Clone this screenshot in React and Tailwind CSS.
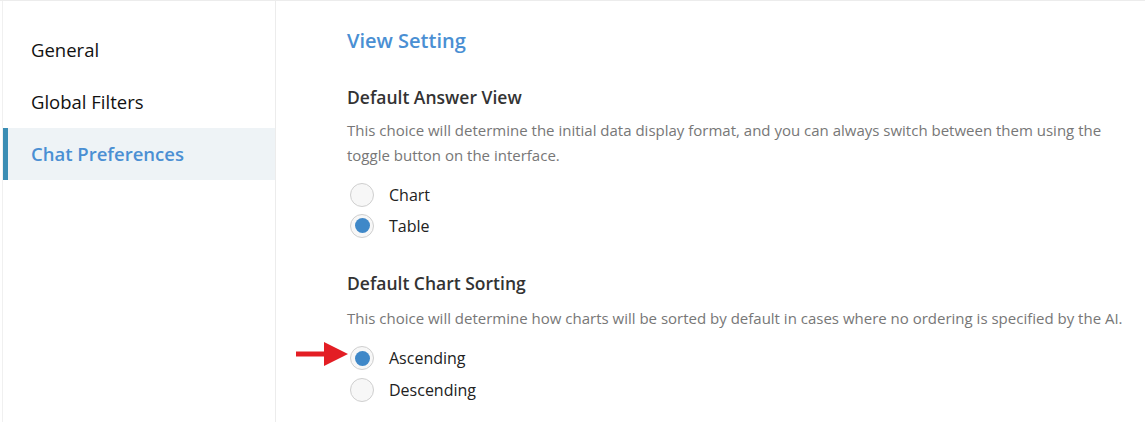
import React, { useState } from 'react';

const NAV_ITEMS = ['General', 'Global Filters', 'Chat Preferences'];

const Radio = ({ label, checked, onChange, rowClass = 'h-[31px]' }) => (
  <label className={`flex items-center ${rowClass} cursor-pointer`}>
    <span className="w-6 h-6 rounded-full border border-[#cfcfcf] bg-[#f7f7f7] flex items-center justify-center shrink-0 ml-[3px]">
      {checked && <span className="w-[15px] h-[15px] rounded-full bg-[#3f88c8]" />}
    </span>
    <span className="ml-[15px] text-[16px] text-[#222]">{label}</span>
    <input type="radio" className="hidden" checked={checked} onChange={onChange} />
  </label>
);

const Arrow = () => (
  <svg width="54" height="24" viewBox="0 0 54 24" className="absolute left-[-52px] top-0">
    <path d="M1 9.5 H29 V0 L53 12 L29 24 V14.5 H1 Z" fill="#e31e24" />
  </svg>
);

export default function App() {
  const [active, setActive] = useState('Chat Preferences');
  const [view, setView] = useState('Table');
  const [sort, setSort] = useState('Ascending');

  return (
    <div className="w-[1145px] h-[422px] bg-white border-t border-[#ececec] flex font-['Open_Sans',sans-serif] overflow-hidden">
      {/* Sidebar */}
      <div className="w-[274px] ml-[2px] border-l border-[#f0f0f0] border-r border-r-[#ececec] pt-[23px] shrink-0">
        {NAV_ITEMS.map((item) => {
          const isActive = active === item;
          return (
            <div
              key={item}
              onClick={() => setActive(item)}
              className={`h-[52px] flex items-center text-[18.5px] cursor-pointer ${
                isActive
                  ? 'bg-[#eef3f6] border-l-[5px] border-[#3a8db4] pl-[23px] text-[#4a8fd3] font-semibold'
                  : 'pl-[28px] text-[#111]'
              }`}
            >
              {item}
            </div>
          );
        })}
      </div>

      {/* Content */}
      <div className="flex-1 pl-[71px] pt-[26px]">
        <h2 className="text-[20px] font-semibold text-[#4a8fd3] leading-[28px]">View Setting</h2>

        <h3 className="mt-[30px] text-[17.5px] font-semibold text-[#333] leading-[24px]">Default Answer View</h3>
        <p className="mt-[9px] text-[15px] text-[#777] leading-[25px] w-[770px]">
          This choice will determine the initial data display format, and you can always switch between them using the toggle button on the interface.
        </p>
        <div className="mt-[11px] flex flex-col">
          {['Chart', 'Table'].map((opt) => (
            <Radio key={opt} label={opt} checked={view === opt} onChange={() => setView(opt)} />
          ))}
        </div>

        <h3 className="mt-[30px] text-[17.5px] font-semibold text-[#333] leading-[24px]">Default Chart Sorting</h3>
        <p className="mt-[11px] text-[15px] text-[#777] leading-[25px]">
          This choice will determine how charts will be sorted by default in cases where no ordering is specified by the AI.
        </p>
        <div className="mt-[11px] flex flex-col relative">
          {['Ascending', 'Descending'].map((opt) => (
            <div key={opt} className="relative">
              {opt === 'Ascending' && <Arrow />}
              <Radio
                label={opt}
                rowClass="h-[32px]"
                checked={sort === opt}
                onChange={() => setSort(opt)}
              />
            </div>
          ))}
        </div>
      </div>
    </div>
  );
}
